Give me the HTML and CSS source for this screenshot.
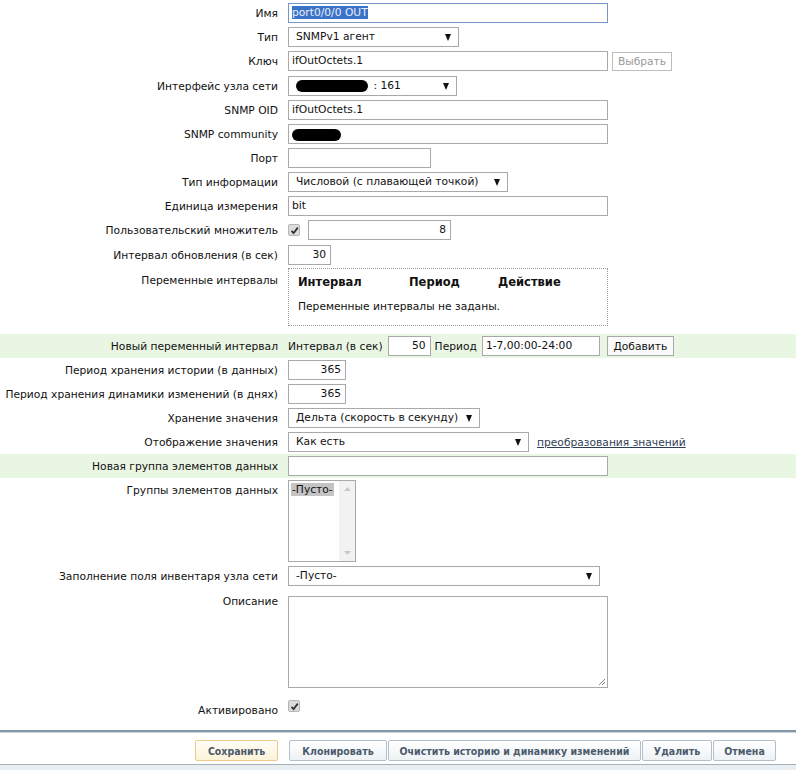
FILE: index.html
```html
<!DOCTYPE html>
<html>
<head>
	<meta charset="utf-8">
	<title>Элемент данных</title>
	<link rel="stylesheet" href="styles.css">
</head>
<body>

<form class="item-form">
	<div class="row">
		<div class="lbl">Имя</div>
		<div class="val"><div class="field wide focused"><span class="sel-text">port0/0/0 OUT</span></div></div>
	</div>
	<div class="row">
		<div class="lbl">Тип</div>
		<div class="val"><div class="select w-type"><span>SNMPv1 агент</span><i class="arrow"></i></div></div>
	</div>
	<div class="row row-tall">
		<div class="lbl">Ключ</div>
		<div class="val">
			<div class="field wide">ifOutOctets.1</div>
			<button type="button" class="btn btn-disabled btn-pick">Выбрать</button>
		</div>
	</div>
	<div class="row">
		<div class="lbl">Интерфейс узла сети</div>
		<div class="val"><div class="select w-iface"><span><b class="blot blot-iface"></b> : 161</span><i class="arrow"></i></div></div>
	</div>
	<div class="row">
		<div class="lbl">SNMP OID</div>
		<div class="val"><div class="field wide">ifOutOctets.1</div></div>
	</div>
	<div class="row">
		<div class="lbl">SNMP community</div>
		<div class="val"><div class="field wide"><b class="blot blot-comm"></b></div></div>
	</div>
	<div class="row">
		<div class="lbl">Порт</div>
		<div class="val"><div class="field w-port"></div></div>
	</div>
	<div class="row">
		<div class="lbl">Тип информации</div>
		<div class="val"><div class="select w-info"><span>Числовой (с плавающей точкой)</span><i class="arrow"></i></div></div>
	</div>
	<div class="row">
		<div class="lbl">Единица измерения</div>
		<div class="val"><div class="field wide">bit</div></div>
	</div>
	<div class="row row-tall">
		<div class="lbl">Пользовательский множитель</div>
		<div class="val">
			<span class="check"><svg width="9" height="9" viewBox="0 0 9 9"><path d="M1.5 4.8 L3.6 7 L7.8 1.6" fill="none" stroke="#333" stroke-width="1.8"/></svg></span>
			<div class="field num w-mult">8</div>
		</div>
	</div>
	<div class="row">
		<div class="lbl">Интервал обновления (в сек)</div>
		<div class="val"><div class="field num w-small">30</div></div>
	</div>
	<div class="row row-box">
		<div class="lbl">Переменные интервалы</div>
		<div class="val">
			<div class="interval-box">
				<table>
					<tr><th class="c1">Интервал</th><th class="c2">Период</th><th>Действие</th></tr>
					<tr><td colspan="3">Переменные интервалы не заданы.</td></tr>
				</table>
			</div>
		</div>
	</div>
	<div class="row green">
		<div class="lbl">Новый переменный интервал</div>
		<div class="val">
			<span class="inline-lbl">Интервал (в сек)</span>
			<div class="field num w-small">50</div>
			<span class="inline-lbl">Период</span>
			<div class="field w-period">1-7,00:00-24:00</div>
			<button type="button" class="btn btn-add">Добавить</button>
		</div>
	</div>
	<div class="row">
		<div class="lbl">Период хранения истории (в данных)</div>
		<div class="val"><div class="field num w-days">365</div></div>
	</div>
	<div class="row">
		<div class="lbl">Период хранения динамики изменений (в днях)</div>
		<div class="val"><div class="field num w-days">365</div></div>
	</div>
	<div class="row">
		<div class="lbl">Хранение значения</div>
		<div class="val"><div class="select w-delta"><span>Дельта (скорость в секунду)</span><i class="arrow"></i></div></div>
	</div>
	<div class="row">
		<div class="lbl">Отображение значения</div>
		<div class="val">
			<div class="select w-map"><span>Как есть</span><i class="arrow"></i></div>
			<a class="link" href="#">преобразования значений</a>
		</div>
	</div>
	<div class="row green">
		<div class="lbl">Новая группа элементов данных</div>
		<div class="val"><div class="field wide"></div></div>
	</div>
	<div class="row">
		<div class="lbl">Группы элементов данных</div>
		<div class="val">
			<div class="listbox">
				<div class="options"><span class="opt">-Пусто-</span></div>
				<div class="scroll">
					<svg width="7" height="4" viewBox="0 0 7 4"><path d="M0 4 L3.5 0 L7 4z" fill="#c8c8c8"/></svg>
					<svg width="7" height="4" viewBox="0 0 7 4"><path d="M0 0 L3.5 4 L7 0z" fill="#c8c8c8"/></svg>
				</div>
			</div>
		</div>
	</div>
	<div class="row">
		<div class="lbl">Заполнение поля инвентаря узла сети</div>
		<div class="val"><div class="select w-inv"><span>-Пусто-</span><i class="arrow"></i></div></div>
	</div>
	<div class="row row-desc">
		<div class="lbl">Описание</div>
		<div class="val">
			<div class="textarea">
				<svg class="grip" width="9" height="9" viewBox="0 0 9 9"><path d="M8 2 L2 8 M8 5 L5 8" stroke="#888" stroke-width="1"/></svg>
			</div>
		</div>
	</div>
	<div class="row row-active">
		<div class="lbl">Активировано</div>
		<div class="val">
			<span class="check"><svg width="9" height="9" viewBox="0 0 9 9"><path d="M1.5 4.8 L3.6 7 L7.8 1.6" fill="none" stroke="#333" stroke-width="1.8"/></svg></span>
		</div>
	</div>

	<div class="footer">
		<div class="lbl"><button type="button" class="fbtn fbtn-main">Сохранить</button></div>
		<div class="val">
			<button type="button" class="fbtn w-clone">Клонировать</button>
			<button type="button" class="fbtn w-clear">Очистить историю и динамику изменений</button>
			<button type="button" class="fbtn w-del">Удалить</button>
			<button type="button" class="fbtn w-cancel">Отмена</button>
		</div>
	</div>
	<div class="page-bottom"></div>
</form>

</body>
</html>
```

FILE: styles.css
```css
body {
	margin: 0;
	background: white;
	color: #111;
	font-family: "DejaVu Sans", Verdana, sans-serif;
	font-size: 10.7px;
}

.item-form {
	padding-top: 1px;
}

/* --------------- rows */

.row {
	display: flex;
	align-items: flex-start;
	padding: 2px 0;
}
.row.row-tall { padding-bottom: 3px; }
.row.green {
	background: #eaf6e4;
}
.lbl {
	flex: none;
	width: 278px;
	padding-top: 2px;
	text-align: right;
	line-height: 18px;
	white-space: nowrap;
}
.val {
	display: flex;
	align-items: center;
	gap: 4px;
	margin-left: 10px;
}

/* --------------- fields */

.field, .select {
	box-sizing: border-box;
	height: 20px;
	line-height: 18px;
	border: 1px solid #a9a9a9;
	background: white;
	padding: 0 3px;
	white-space: nowrap;
	overflow: hidden;
}
.field.num { text-align: right; padding-right: 4px; }
.field.focused { border-color: #7596c6; }
.sel-text {
	background: #3a72c8;
	color: #e8eefa;
}

.wide { width: 320px; }
.w-port { width: 143px; }
.w-mult { width: 143px; margin-left: 4px; }
.w-small { width: 43px; }
.w-days { width: 58px; }
.w-period { width: 118px; }

.select {
	display: flex;
	align-items: center;
	justify-content: space-between;
	padding: 0 7px 0 7px;
}
.select .arrow {
	width: 0;
	height: 0;
	border-left: 3.5px solid transparent;
	border-right: 3.5px solid transparent;
	border-top: 7px solid #111;
}
.w-type { width: 171px; }
.w-iface { width: 169px; }
.w-info { width: 220px; }
.w-delta { width: 192px; }
.w-map { width: 241px; }
.w-inv { width: 312px; }

.blot {
	display: inline-block;
	vertical-align: middle;
	background: #000;
	border-radius: 7px;
}
.blot-iface { width: 72px; height: 12px; margin-right: 2px; }
.blot-comm { width: 49px; height: 12px; margin-top: 2px; }

.check {
	display: inline-flex;
	align-items: center;
	justify-content: center;
	box-sizing: border-box;
	width: 12px;
	height: 12px;
	border: 1px solid #b5b5b5;
	border-radius: 2px;
	background: #dcdcdc;
}

.link {
	margin-left: 4px;
	color: #2f3e55;
}

.inline-lbl {
	margin: 0 1px 0 0;
}

/* --------------- buttons */

.btn {
	box-sizing: border-box;
	height: 20px;
	padding: 0 4px;
	border: 1px solid #a9a9a9;
	background: #fafafa;
	font: inherit;
	color: #111;
}
.btn-disabled { color: #999; border-color: #bdbdbd; background: white; }
.btn-pick { width: 60px; height: 19px; margin-top: 1px; }
.btn-add { width: 67px; margin-left: 3px; }

/* --------------- variable intervals */

.row-box .lbl { padding-top: 3px; }
.row-box { padding-bottom: 8px; }
.interval-box {
	box-sizing: border-box;
	width: 320px;
	height: 58px;
	margin-top: -1px;
	border: 1px dotted #9a9a9a;
	padding: 6px 9px;
}
.interval-box table {
	border-collapse: collapse;
}
.interval-box th {
	text-align: left;
	font-weight: bold;
	padding: 0 0 11px 0;
	font-size: 11.5px;
}
.interval-box th.c1 { width: 111px; }
.interval-box th.c2 { width: 89px; }
.interval-box td { padding: 0; }

/* --------------- groups listbox */

.listbox {
	box-sizing: border-box;
	display: flex;
	width: 68px;
	height: 82px;
	border: 1px solid #a9a9a9;
}
.listbox .options {
	flex: 1;
	padding: 2px;
}
.listbox .opt {
	display: inline-block;
	background: #c4c4c4;
	line-height: 13px;
	padding: 0 1px;
}
.listbox .scroll {
	width: 16px;
	background: #f2f2f2;
	display: flex;
	flex-direction: column;
	justify-content: space-between;
	align-items: center;
	padding: 6px 0;
}

/* --------------- description */

.row-desc { margin-top: 1px; }
.textarea {
	position: relative;
	box-sizing: border-box;
	width: 320px;
	height: 92px;
	margin-top: 5px;
	border: 1px solid #a9a9a9;
}
.textarea .grip {
	position: absolute;
	right: 1px;
	bottom: 1px;
}
.row-active { margin-top: 8px; }

/* --------------- footer */

.footer {
	display: flex;
	margin-top: 8px;
	border-top: 2px solid #8596a6;
	box-shadow: inset 0 1px 0 #c9d5de;
	border-bottom: 1px solid #a5b0b9;
	padding: 8px 0 3px 0;
}
.footer .lbl {
	display: flex;
	justify-content: flex-end;
	padding-top: 0;
}
.footer .val {
	gap: 1px;
}
.fbtn {
	box-sizing: border-box;
	height: 21px;
	border: 1px solid #b2bec8;
	border-radius: 2px;
	background: linear-gradient(#ffffff, #eef2f5);
	color: #4b5b6c;
	font: bold 10.5px "DejaVu Sans Condensed", "DejaVu Sans", sans-serif;
	white-space: nowrap;
	padding: 0;
}
.fbtn-main {
	width: 83px;
	border-color: #eec98c;
	background: linear-gradient(#fffdf6, #fdf3d9);
}
.w-clone { width: 98px; margin-left: 1px; }
.w-clear { width: 253px; }
.w-del { width: 70px; }
.w-cancel { width: 63px; }

.page-bottom {
	height: 20px;
	background: #e9eef2;
}
```
